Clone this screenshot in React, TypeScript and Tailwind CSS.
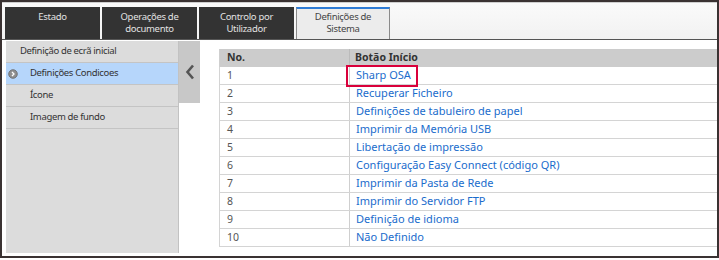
import React from "react";

const rows = [
  "Sharp OSA",
  "Recuperar Ficheiro",
  "Definições de tabuleiro de papel",
  "Imprimir da Memória USB",
  "Libertação de impressão",
  "Configuração Easy Connect (código QR)",
  "Imprimir da Pasta de Rede",
  "Imprimir do Servidor FTP",
  "Definição de idioma",
  "Não Definido",
];

function Tab({ a, b }: { a: string; b?: string }) {
  return (
    <div className="w-[95px] h-[32px] bg-[#333333] text-[#e2e2e2] text-[9.5px] tracking-[-0.3px] leading-[11.5px] flex flex-col items-center justify-start pt-[4px] text-center">
      <span>{a}</span>
      {b && <span>{b}</span>}
    </div>
  );
}

export default function App() {
  return (
    <div className="w-[719px] h-[260px] bg-white" style={{ fontFamily: '"Noto Sans", "Open Sans", sans-serif' }}>
      <div className="h-[258px] border-2 border-[#3a3232] flex flex-col">
        <div className="h-[38px] bg-gradient-to-b from-[#fafafa] to-[#f2f2f2] border-t border-[#cfcfcf] border-b border-b-[#555555] flex items-end pl-[3px] gap-[2px]">
          <Tab a="Estado" />
          <Tab a="Operações de" b="documento" />
          <Tab a="Controlo por" b="Utilizador" />
          <div className="w-[94px] h-[32px] bg-[#ececec] border-x border-[#8a8a8a] border-t-[2px] border-t-[#2f7cd6] text-[#444] text-[9.5px] tracking-[-0.3px] leading-[11.5px] flex flex-col items-center justify-start pt-[2px] text-center">
            <span>Definições de</span>
            <span>Sistema</span>
          </div>
        </div>
        <div className="flex flex-1 min-h-0">
          <div className="ml-[4px] mt-[1px] mb-[3px] w-[173px] bg-[#dcdcdc] border-r border-[#c2c2c2] text-[9.5px] tracking-[-0.35px] text-[#333]">
            <div className="h-[22px] flex items-center pl-[14px] border-b border-[#c4c4c4]">Definição de ecrã inicial</div>
            <div className="h-[22px] flex items-center bg-[#b6d6fb] border-b border-[#c4c4c4] relative">
              <svg className="absolute left-[2px] top-[6px]" width="10" height="10" viewBox="0 0 10 10">
                <circle cx="5" cy="5" r="4.3" fill="#8f8f8f" stroke="#666" strokeWidth="0.8" />
                <path d="M4 3 L6 5 L4 7" fill="none" stroke="#fff" strokeWidth="1.3" />
              </svg>
              <span className="pl-[24px]">Definições Condicoes</span>
            </div>
            <div className="h-[22px] flex items-center pl-[24px] border-b border-[#c4c4c4]">Ícone</div>
            <div className="h-[22px] flex items-center pl-[24px] border-b border-[#c4c4c4]">Imagem de fundo</div>
          </div>
          <div className="mt-[1px] w-[21px] h-[62px] bg-[#c8c8c8] flex items-center justify-center">
            <svg width="10" height="16" viewBox="0 0 10 16">
              <path d="M8 1.5 L2.5 8 L8 14.5" fill="none" stroke="#555" strokeWidth="2.6" />
            </svg>
          </div>
          <div className="ml-[19px] mt-[9px] flex-1 relative">
            <div className="flex h-[18px] bg-[#cccccc] text-[10.5px] font-bold text-[#333] items-center border-l border-[#cfcfcf]">
              <div className="w-[130px] pl-[7px] border-r border-[#bbb] h-full flex items-center">No.</div>
              <div className="pl-[5px]">Botão Início</div>
            </div>
            {rows.map((r, i) => (
              <div key={i} className="flex h-[18px] items-center border-b border-l border-[#d4d4d4]">
                <div className="w-[130px] pl-[7px] border-r border-[#cfcfcf] h-full flex items-center text-[10.5px] text-[#555]">{i + 1}</div>
                <div className="pl-[6px] text-[11px] text-[#1a6ccc]">{r}</div>
              </div>
            ))}
            <div className="absolute left-[127px] top-[16px] w-[72px] h-[22px] border-2 border-[#d9003b]" />
          </div>
        </div>
      </div>
    </div>
  );
}
